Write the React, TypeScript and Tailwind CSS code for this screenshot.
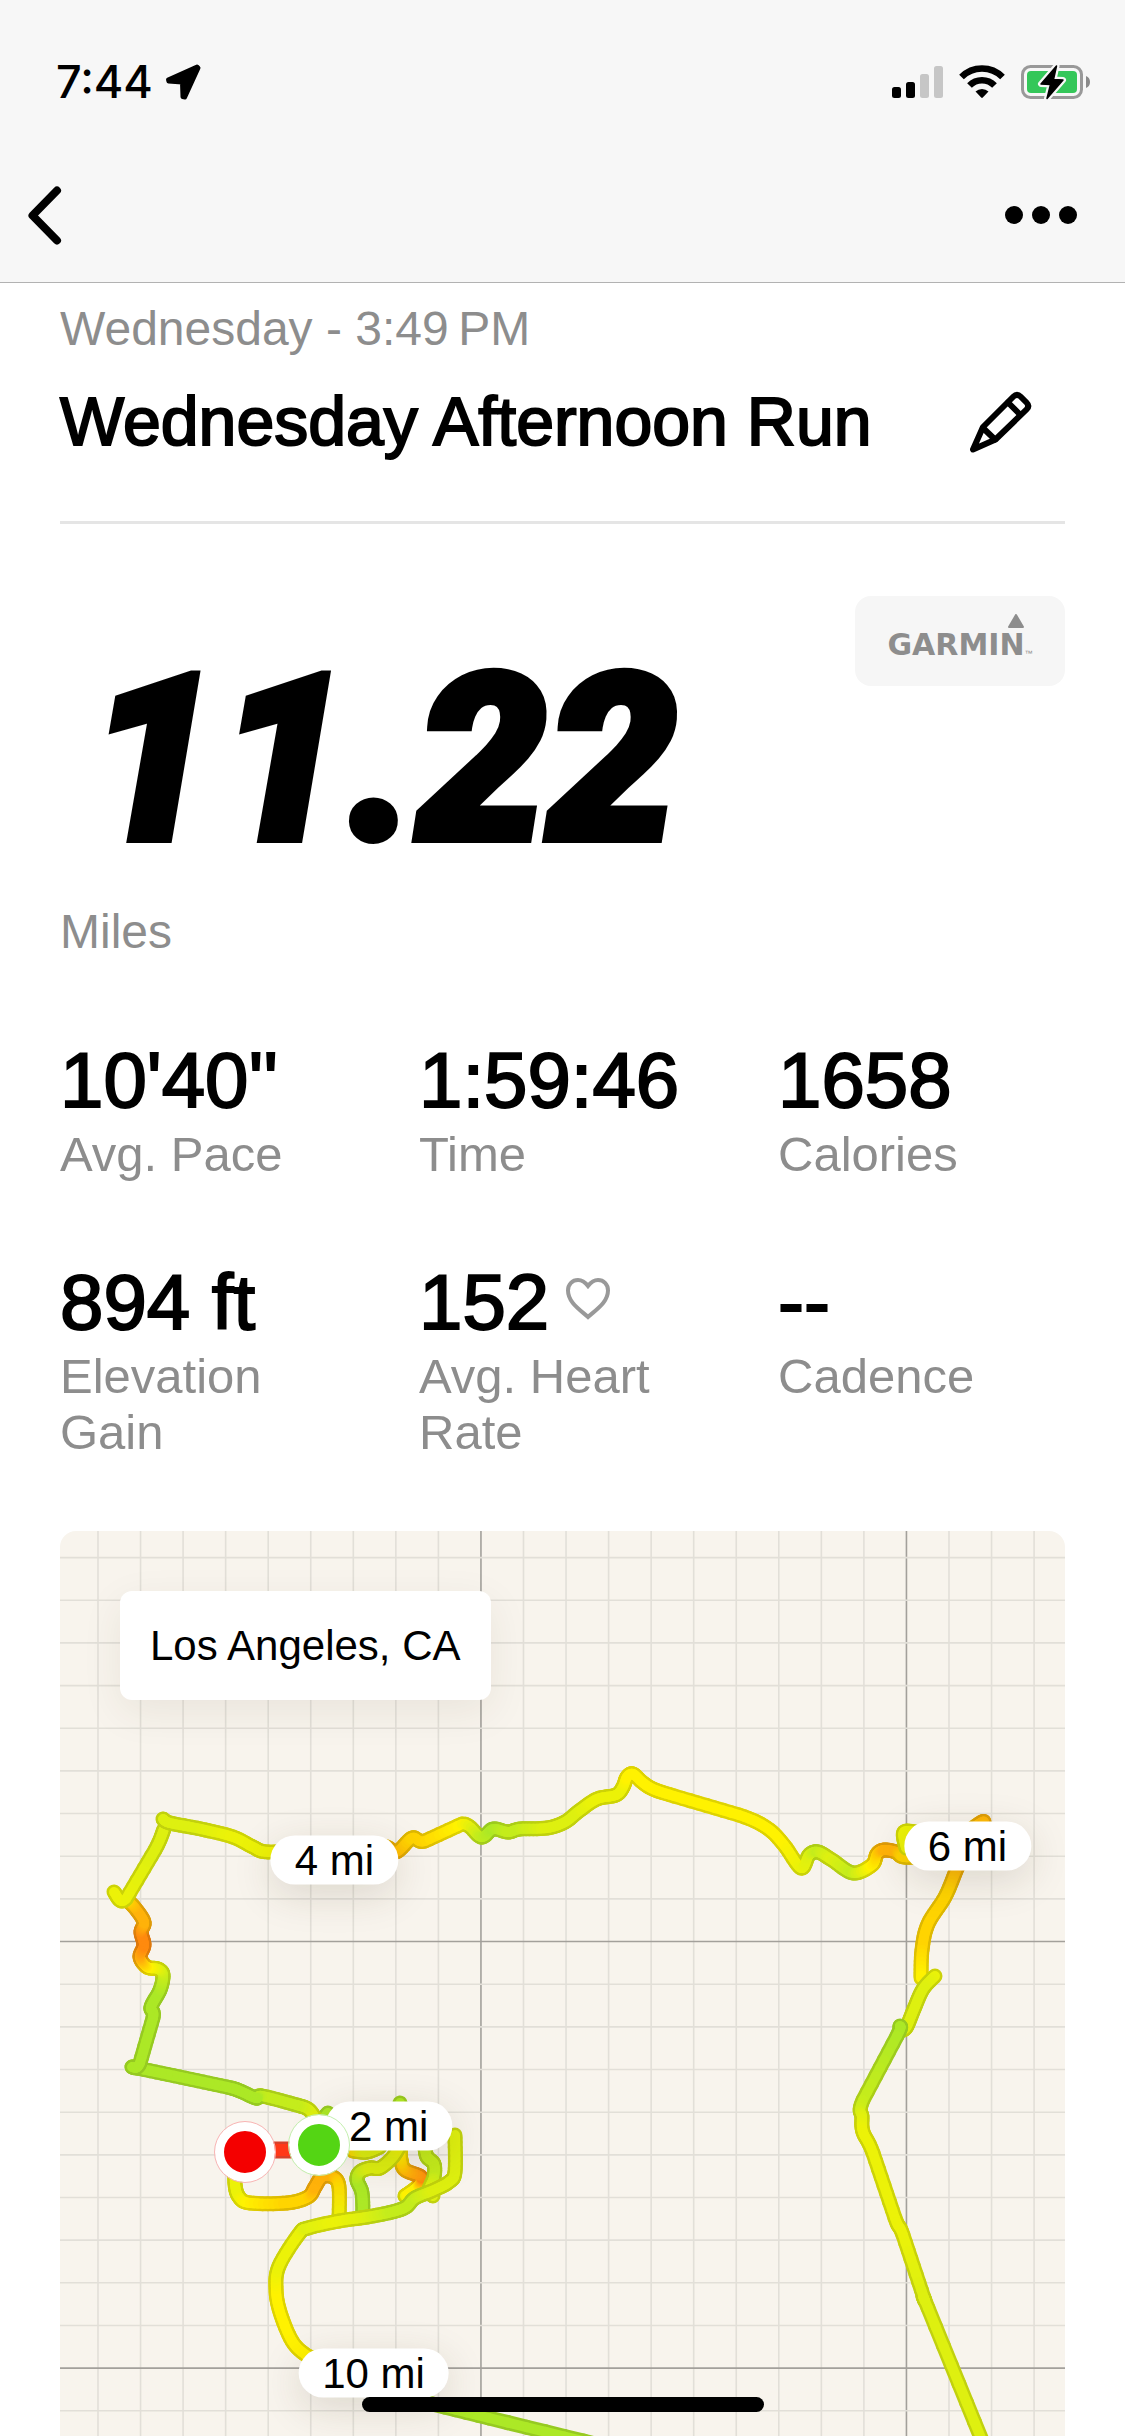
import type { ReactNode } from "react";

type Rgb = [number, number, number];
type RoutePoint = [number, number, Rgb];

interface Stat {
  value: string;
  label: string;
  heart?: boolean;
}

interface MilePin {
  label: string;
  className: string;
}

const YELLOW: Rgb = [255, 242, 0];
const LEMON: Rgb = [236, 242, 8];
const LIME: Rgb = [222, 240, 16];
const GRASS: Rgb = [196, 236, 28];
const GREEN: Rgb = [172, 232, 38];
const GOLD: Rgb = [255, 212, 0];
const AMBER: Rgb = [255, 178, 10];
const ORANGE: Rgb = [255, 138, 14];
const RED: Rgb = [255, 56, 24];

const STATS: Stat[] = [
  { value: "10'40''", label: "Avg. Pace" },
  { value: "1:59:46", label: "Time" },
  { value: "1658", label: "Calories" },
  { value: "894 ft", label: "Elevation Gain" },
  { value: "152", label: "Avg. Heart Rate", heart: true },
  { value: "--", label: "Cadence" },
];

const PINS: MilePin[] = [
  { label: "4 mi", className: "left-[27.3%] top-[36.4%]" },
  { label: "6 mi", className: "left-[90.3%] top-[34.8%]" },
  { label: "2 mi", className: "left-[32.7%] top-[65.8%]" },
  { label: "10 mi", className: "left-[31.2%] top-[93%]" },
];

const LEGS: RoutePoint[][] = [
  // loop around the start
  [
    [400, 2103, GREEN],
    [402, 2120, GRASS],
  ],
  [
    [353, 2151, GOLD],
    [367, 2152, LIME],
    [380, 2147, LIME],
  ],
  [
    [405, 2196, LIME],
    [408, 2194, YELLOW],
    [418, 2186, YELLOW],
    [421, 2177, ORANGE],
    [405, 2170, AMBER],
    [401, 2160, GOLD],
    [400, 2148, YELLOW],
  ],
  [
    [363, 2217, GREEN],
    [362, 2193, GREEN],
    [357, 2180, GREEN],
    [360, 2172, GRASS],
    [370, 2168, LIME],
    [380, 2168, LIME],
    [392, 2158, LIME],
    [400, 2146, LEMON],
  ],
  [
    [235, 2160, YELLOW],
    [235, 2184, LEMON],
    [239, 2197, LEMON],
    [250, 2203, YELLOW],
    [287, 2203, GOLD],
    [308, 2197, GOLD],
    [315, 2187, AMBER],
    [322, 2177, AMBER],
    [333, 2177, AMBER],
    [339, 2187, GOLD],
    [339, 2221, LEMON],
  ],
  [
    [425, 2148, GRASS],
    [427, 2157, GRASS],
    [434, 2164, GRASS],
    [434, 2177, GRASS],
    [429, 2190, LIME],
    [433, 2196, LIME],
  ],
  [
    [317, 2359, LEMON],
    [306, 2355, YELLOW],
    [292, 2341, YELLOW],
    [280, 2312, YELLOW],
    [276, 2289, YELLOW],
    [279, 2266, LEMON],
    [299, 2234, LEMON],
    [308, 2228, LIME],
    [339, 2221, LEMON],
    [367, 2217, LIME],
    [392, 2212, GRASS],
    [406, 2207, GRASS],
    [415, 2198, GRASS],
    [434, 2190, LIME],
    [449, 2182, LIME],
    [455, 2172, LIME],
    [455, 2135, LIME],
  ],
  [
    [328, 2113, GREEN],
    [322, 2120, GREEN],
  ],
  // out west, across the top and over to mile 6
  [
    [315, 2118, LIME],
    [308, 2109, LIME],
    [293, 2104, GRASS],
    [262, 2096, GRASS],
    [256, 2098, GREEN],
    [240, 2091, GREEN],
    [227, 2087, GREEN],
    [180, 2077, GREEN],
    [132, 2067, GREEN],
  ],
  [
    [132, 2067, GREEN],
    [140, 2063, GREEN],
    [153, 2018, GREEN],
    [151, 2007, GREEN],
    [160, 1990, GREEN],
    [163, 1975, GRASS],
    [158, 1969, LIME],
    [147, 1967, YELLOW],
    [140, 1957, AMBER],
    [144, 1945, ORANGE],
    [141, 1932, ORANGE],
    [144, 1922, AMBER],
    [135, 1908, AMBER],
    [127, 1900, GOLD],
  ],
  [
    [114, 1892, LEMON],
    [126, 1899, LEMON],
    [155, 1850, LIME],
    [164, 1829, LIME],
  ],
  [
    [163, 1819, LIME],
    [170, 1823, LIME],
    [201, 1829, LIME],
    [233, 1837, LEMON],
    [253, 1847, LEMON],
    [268, 1852, LEMON],
    [320, 1852, YELLOW],
    [380, 1846, GOLD],
    [396, 1852, AMBER],
    [412, 1838, GOLD],
    [425, 1841, GOLD],
    [462, 1824, YELLOW],
    [481, 1837, GRASS],
    [493, 1829, GREEN],
    [508, 1832, GRASS],
    [520, 1829, GRASS],
    [547, 1828, LIME],
    [565, 1822, LIME],
    [579, 1811, LIME],
    [597, 1799, LEMON],
    [616, 1795, LEMON],
    [623, 1787, LEMON],
    [627, 1777, YELLOW],
    [633, 1774, YELLOW],
    [642, 1782, YELLOW],
    [653, 1789, YELLOW],
    [674, 1796, YELLOW],
    [739, 1815, YELLOW],
    [767, 1828, YELLOW],
    [784, 1845, YELLOW],
    [801, 1868, LEMON],
    [809, 1855, LIME],
    [818, 1852, GRASS],
    [832, 1860, LIME],
    [853, 1873, GRASS],
    [872, 1865, YELLOW],
    [877, 1854, GOLD],
    [884, 1850, AMBER],
    [896, 1852, AMBER],
    [904, 1857, GOLD],
    [930, 1856, GOLD],
  ],
  [
    [906, 1848, LEMON],
    [904, 1832, LEMON],
    [920, 1833, LEMON],
  ],
  // back down the east side
  [
    [970, 1830, GOLD],
    [984, 1822, AMBER],
    [966, 1848, GOLD],
    [956, 1871, AMBER],
    [945, 1897, GOLD],
    [928, 1924, GOLD],
    [922, 1950, GOLD],
    [921, 1978, YELLOW],
  ],
  [
    [935, 1976, LEMON],
    [923, 1989, LIME],
    [914, 2009, LIME],
    [907, 2026, LIME],
    [903, 2030, LIME],
  ],
  [
    [900, 2026, GREEN],
    [897, 2036, GREEN],
    [863, 2100, GRASS],
    [862, 2117, LIME],
    [863, 2132, LEMON],
    [873, 2153, LEMON],
    [895, 2218, LEMON],
    [903, 2235, LEMON],
    [924, 2298, LIME],
    [928, 2308, LIME],
    [990, 2460, LIME],
  ],
  [
    [400, 2396, GREEN],
    [489, 2418, GREEN],
    [640, 2455, GREEN],
  ],
];

const mix = (a: number, b: number, t: number) => a + (b - a) * t;

const spline = (a: number, b: number, c: number, d: number, t: number) =>
  0.5 *
  (2 * b +
    (c - a) * t +
    (2 * a - 5 * b + 4 * c - d) * t * t +
    (3 * b - a - 3 * c + d) * t * t * t);

function smooth(points: RoutePoint[]): RoutePoint[] {
  const steps = 8;
  const out: RoutePoint[] = [points[0]];
  for (let i = 0; i < points.length - 1; i++) {
    const p0 = points[Math.max(0, i - 1)];
    const p1 = points[i];
    const p2 = points[i + 1];
    const p3 = points[Math.min(points.length - 1, i + 2)];
    const length = Math.hypot(p2[0] - p1[0], p2[1] - p1[1]);
    for (let s = 1; s <= steps; s++) {
      const t = s / steps;
      const color = p1[2].map((c, k) => mix(c, p2[2][k], t)) as Rgb;
      // long stretches stay straight, short ones are rounded
      out.push(
        length > 40
          ? [mix(p1[0], p2[0], t), mix(p1[1], p2[1], t), color]
          : [
              spline(p0[0], p1[0], p2[0], p3[0], t),
              spline(p0[1], p1[1], p2[1], p3[1], t),
              color,
            ]
      );
    }
  }
  return out;
}

const toCss = (color: Rgb, shade = 1) =>
  `rgb(${color.map((c) => Math.round(c * shade)).join(",")})`;

function RouteLeg({ points }: { points: RoutePoint[] }) {
  const curve = smooth(points);
  const strokes = [
    { width: 15, shade: 0.87 },
    { width: 10, shade: 1 },
  ];

  return (
    <g strokeLinecap="round">
      {strokes.map(({ width, shade }) =>
        curve
          .slice(1)
          .map((p, i) => (
            <line
              key={`${width}-${i}`}
              x1={curve[i][0]}
              y1={curve[i][1]}
              x2={p[0]}
              y2={p[1]}
              stroke={toCss(p[2], shade)}
              strokeWidth={width}
            />
          ))
      )}
    </g>
  );
}

function MapDrawing() {
  const columns = Array.from({ length: 23 }, (_, i) => i);
  const rows = Array.from({ length: 21 }, (_, i) => i);

  return (
    <svg
      viewBox="60 1531 1005 905"
      className="block w-full"
      role="img"
      aria-label="Route map"
    >
      <rect x="60" y="1531" width="1005" height="905" fill="#f8f4ed" />
      <g strokeWidth="1.6">
        {columns.map((i) => (
          <line
            key={`c${i}`}
            x1={98 + i * 42.55}
            x2={98 + i * 42.55}
            y1="1531"
            y2="2436"
            stroke={i % 10 === 9 ? "#a3a09b" : "#e2dfd8"}
          />
        ))}
        {rows.map((i) => (
          <line
            key={`r${i}`}
            x1="60"
            x2="1065"
            y1={1557.6 + i * 42.66}
            y2={1557.6 + i * 42.66}
            stroke={i % 10 === 9 ? "#a3a09b" : "#e2dfd8"}
          />
        ))}
      </g>
      {LEGS.map((points, i) => (
        <RouteLeg key={i} points={points} />
      ))}
      <line x1="245" y1="2150" x2="319" y2="2150" stroke="#d8402a" strokeWidth="17" />
      <line x1="245" y1="2150" x2="319" y2="2150" stroke={toCss(RED)} strokeWidth="12" />
    </svg>
  );
}

function Marker({ className }: { className: string }) {
  return (
    <span
      className={`absolute size-[60px] rounded-full border-[9px] border-white ${className}`}
    />
  );
}

function StatusBar() {
  return (
    <div className="flex h-[164px] items-center justify-between pl-14 pr-[34px]">
      <div className="flex items-center gap-3">
        <time className="font-[Inter,sans-serif] text-[45px] leading-[52px] font-medium">
          7:44
        </time>
        <svg viewBox="0 0 36 36" className="size-9" aria-hidden="true">
          <path
            d="M3 15.500 L32 2.500 L33.500 4 L20 33.500 L17.500 33 L17 18.500 L3.500 17.500 Z"
            stroke="#000"
            strokeWidth="4"
            strokeLinejoin="round"
          />
        </svg>
      </div>
      <div className="flex items-center gap-4">
        <svg viewBox="0 0 51 34" className="h-[34px] w-[51px]" aria-hidden="true">
          <rect x="0" y="22" width="9" height="11" rx="2.500" />
          <rect x="14" y="17" width="9" height="16" rx="2.500" />
          <rect x="28" y="9" width="9" height="24" rx="2.500" fill="#c6c6c6" />
          <rect x="42" y="1" width="9" height="32" rx="2.500" fill="#c6c6c6" />
        </svg>
        <svg viewBox="0 0 46 34" className="h-[34px] w-[46px]" aria-hidden="true">
          <g fill="none" stroke="#000" strokeWidth="6.600">
            <path d="M2.500 12 A29 29 0 0 1 43.500 12" />
            <path d="M10.500 20.500 A17.500 17.500 0 0 1 35.500 20.500" />
          </g>
          <path d="M16.500 26.500 A9.500 9.500 0 0 1 29.500 26.500 L23.800 32.600 Q23 33.300 22.200 32.600 Z" />
        </svg>
        <svg viewBox="0 0 70 36" className="h-9 w-[70px]" aria-hidden="true">
          <rect x="1.500" y="2.500" width="59" height="31" rx="8" fill="none" stroke="#999" strokeWidth="3" />
          <rect x="6" y="7" width="50" height="22" rx="4" fill="#34c759" />
          <path d="M65 12 Q69 13.500 69 18 Q69 22.500 65 24 Z" fill="#8a8a8a" />
          <path
            d="M35.500 2 L20 20 L29.500 20.500 L26 34.500 L42 16 L32.500 15.500 Z"
            stroke="#f7f7f7"
            strokeWidth="6"
            strokeLinejoin="round"
          />
          <path
            d="M35.500 2 L20 20 L29.500 20.500 L26 34.500 L42 16 L32.500 15.500 Z"
            stroke="#000"
            strokeWidth="1.500"
            strokeLinejoin="round"
          />
        </svg>
      </div>
    </div>
  );
}

function IconButton({
  label,
  className = "",
  children,
}: {
  label: string;
  className?: string;
  children: ReactNode;
}) {
  return (
    <button type="button" aria-label={label} className={`block shrink-0 ${className}`}>
      {children}
    </button>
  );
}

function NavBar() {
  return (
    <nav className="flex h-[102px] items-center justify-between pl-7 pr-12">
      <IconButton label="Back">
        <svg viewBox="0 0 34 60" className="h-[60px] w-[34px]">
          <path
            d="M29 5.500 L4.500 30.500 L29 55.500"
            fill="none"
            stroke="#000"
            strokeWidth="8"
            strokeLinecap="round"
            strokeLinejoin="round"
          />
        </svg>
      </IconButton>
      <IconButton label="More options">
        <svg viewBox="0 0 72 18" className="h-[18px] w-[72px]">
          <circle cx="9" cy="9" r="9" />
          <circle cx="36" cy="9" r="9" />
          <circle cx="63" cy="9" r="9" />
        </svg>
      </IconButton>
    </nav>
  );
}

function GarminBadge() {
  return (
    <div className="relative flex h-[90px] w-[210px] items-end justify-center rounded-2xl bg-[#f6f6f6] pb-6 text-[#8d8d8d]">
      <svg
        viewBox="0 0 16 14"
        className="absolute right-[41px] top-[18px] h-3.5 w-4"
        aria-hidden="true"
      >
        <path
          d="M8 1 L15 13 L1 13 Z"
          fill="currentColor"
          stroke="currentColor"
          strokeWidth="2"
          strokeLinejoin="round"
        />
      </svg>
      <span className="font-['DejaVu_Sans',sans-serif] text-[30px] leading-[34px] font-bold">
        GARMIN
      </span>
      <span className="text-[8px] leading-[16px]">™</span>
    </div>
  );
}

function StatItem({ value, label, heart }: Stat) {
  return (
    <div>
      <dd className="flex items-center gap-4 text-[78px] leading-[88px] [-webkit-text-stroke:2px_#000]">
        {value}
        {heart && (
          <svg viewBox="0 0 46 44" className="mb-1.5 h-11 w-[46px]" aria-hidden="true">
            <path
              d="M23 40 C14 32 3 25 3 13.500 C3 7 7.500 3 13 3 C17.500 3 20 5 23 9 C26 5 28.500 3 33 3 C38.500 3 43 7 43 13.500 C43 25 32 32 23 40 Z"
              fill="none"
              stroke="#999"
              strokeWidth="4"
            />
          </svg>
        )}
      </dd>
      <dt className="mt-0.5 text-[49px] leading-[56px] text-[#8d8d8d]">{label}</dt>
    </div>
  );
}

export default function App() {
  return (
    <div className="min-h-screen bg-white font-['Liberation_Sans',Arial,sans-serif] text-black">
      <header className="border-b border-[#b2b2b2] bg-[#f7f7f7] pb-4">
        <StatusBar />
        <NavBar />
      </header>

      <main className="px-[60px] pt-[18px]">
        <p className="text-[48px] leading-[56px] text-[#8d8d8d]">
          Wednesday - 3:49{"\u2009"}PM
        </p>
        <div className="mt-6 flex items-center justify-between border-b-3 border-[#e5e5e5] pb-[60px]">
          <h1 className="text-[68px] leading-[80px] [-webkit-text-stroke:2px_#000]">
            Wednesday Afternoon Run
          </h1>
          <IconButton label="Edit title" className="mr-[33px]">
            <svg viewBox="0 0 64 64" className="size-16">
              <g
                fill="none"
                stroke="#000"
                strokeWidth="6"
                strokeLinecap="round"
                strokeLinejoin="round"
              >
                <path d="M5 60.500 L15 38 L45.500 7.500 Q49 4 52.500 7.500 L58.500 13.500 Q62 17 58.500 20.500 L27.500 50.500 Z" />
                <path d="M40 13.500 L52 25.500" />
                <path d="M15 39 L27 50.500" />
              </g>
            </svg>
          </IconButton>
        </div>

        <section className="flex items-start justify-between pt-[72px]">
          <div>
            <p className="mt-9 pl-7 font-[Roboto,sans-serif] text-[232px] leading-[256px] font-black italic [-webkit-text-stroke:8px_#000]">
              11.22
            </p>
            <p className="mt-4 text-[48px] leading-[56px] text-[#8d8d8d]">Miles</p>
          </div>
          <GarminBadge />
        </section>

        <dl className="mt-19 grid grid-cols-3 gap-x-18 gap-y-19">
          {STATS.map((stat) => (
            <StatItem key={stat.label} {...stat} />
          ))}
        </dl>

        <section className="relative mt-[71px] overflow-hidden rounded-t-2xl">
          <MapDrawing />
          <p className="absolute left-[60px] top-[60px] rounded-xl bg-white p-[30px] text-[42px] leading-[49px] shadow-[0_12px_40px_rgba(60,50,20,0.08)]">
            Los Angeles, CA
          </p>
          {PINS.map((pin) => (
            <span
              key={pin.label}
              className={`absolute -translate-1/2 rounded-full bg-white px-6 text-[42px] leading-[49px] whitespace-nowrap shadow-[0_10px_40px_rgba(60,50,20,0.15)] ${pin.className}`}
            >
              {pin.label}
            </span>
          ))}
          <Marker className="left-[15.4%] top-[65.3%] bg-[#f40000] outline outline-[#f9b5b5]" />
          <Marker className="left-[22.8%] top-[64.5%] bg-[#54d514] outline outline-[#c3efae]" />
        </section>
      </main>

      <div className="fixed bottom-6 left-1/2 h-[15px] w-[402px] -translate-x-1/2 rounded-full bg-black" />
    </div>
  );
}
